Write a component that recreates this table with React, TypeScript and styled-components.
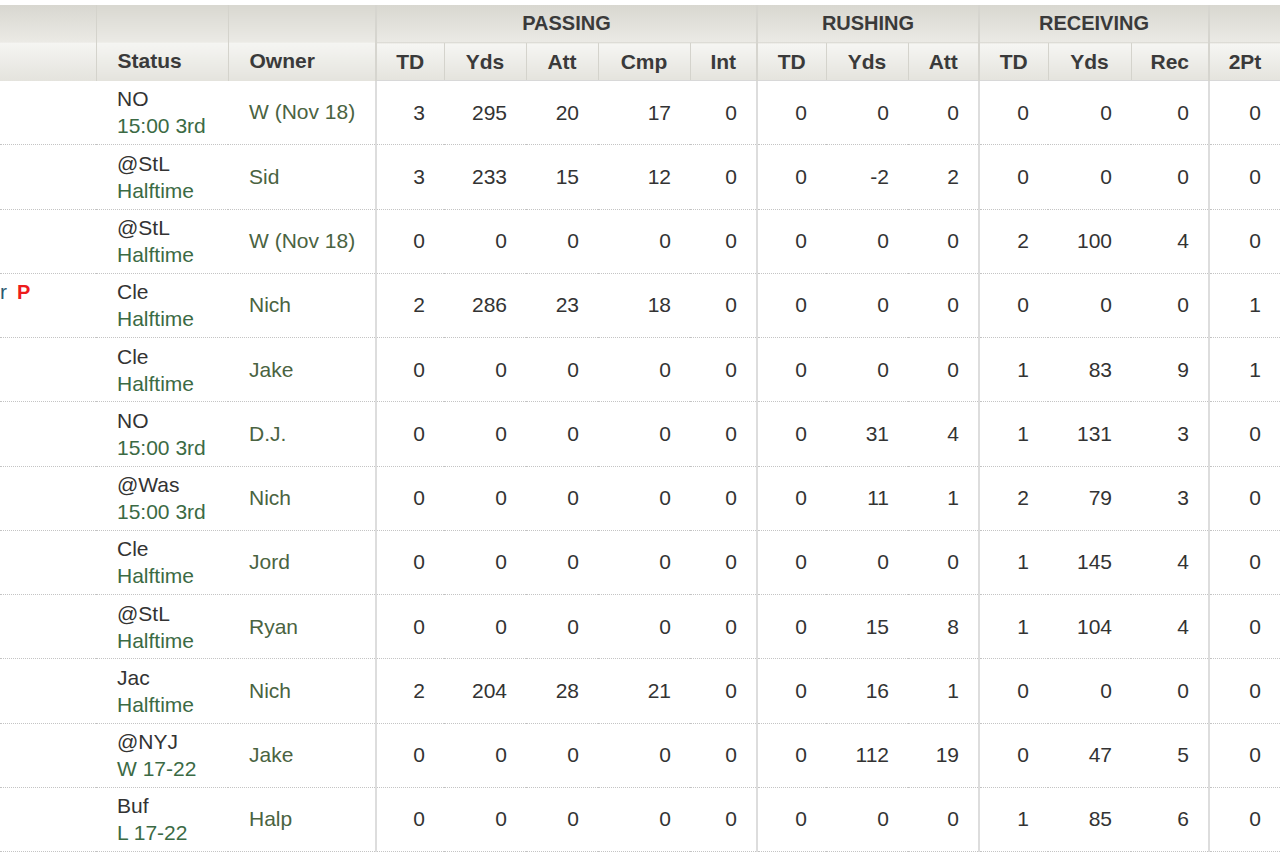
import { createGlobalStyle, styled } from 'styled-components';

type StatRow = {
  opp: string;
  state: string;
  owner: string;
  pass: number[];
  rush: number[];
  rec: number[];
  twoPt: number;
  name?: string;
  flag?: string;
};

const rows: StatRow[] = [
  { opp: 'NO', state: '15:00 3rd', owner: 'W (Nov 18)', pass: [3, 295, 20, 17, 0], rush: [0, 0, 0], rec: [0, 0, 0], twoPt: 0 },
  { opp: '@StL', state: 'Halftime', owner: 'Sid', pass: [3, 233, 15, 12, 0], rush: [0, -2, 2], rec: [0, 0, 0], twoPt: 0 },
  { opp: '@StL', state: 'Halftime', owner: 'W (Nov 18)', pass: [0, 0, 0, 0, 0], rush: [0, 0, 0], rec: [2, 100, 4], twoPt: 0 },
  { opp: 'Cle', state: 'Halftime', owner: 'Nich', pass: [2, 286, 23, 18, 0], rush: [0, 0, 0], rec: [0, 0, 0], twoPt: 1, name: 'r', flag: 'P' },
  { opp: 'Cle', state: 'Halftime', owner: 'Jake', pass: [0, 0, 0, 0, 0], rush: [0, 0, 0], rec: [1, 83, 9], twoPt: 1 },
  { opp: 'NO', state: '15:00 3rd', owner: 'D.J.', pass: [0, 0, 0, 0, 0], rush: [0, 31, 4], rec: [1, 131, 3], twoPt: 0 },
  { opp: '@Was', state: '15:00 3rd', owner: 'Nich', pass: [0, 0, 0, 0, 0], rush: [0, 11, 1], rec: [2, 79, 3], twoPt: 0 },
  { opp: 'Cle', state: 'Halftime', owner: 'Jord', pass: [0, 0, 0, 0, 0], rush: [0, 0, 0], rec: [1, 145, 4], twoPt: 0 },
  { opp: '@StL', state: 'Halftime', owner: 'Ryan', pass: [0, 0, 0, 0, 0], rush: [0, 15, 8], rec: [1, 104, 4], twoPt: 0 },
  { opp: 'Jac', state: 'Halftime', owner: 'Nich', pass: [2, 204, 28, 21, 0], rush: [0, 16, 1], rec: [0, 0, 0], twoPt: 0 },
  { opp: '@NYJ', state: 'W 17-22', owner: 'Jake', pass: [0, 0, 0, 0, 0], rush: [0, 112, 19], rec: [0, 47, 5], twoPt: 0 },
  { opp: 'Buf', state: 'L 17-22', owner: 'Halp', pass: [0, 0, 0, 0, 0], rush: [0, 0, 0], rec: [1, 85, 6], twoPt: 0 },
];

const widths = [96, 132, 148, 68, 82, 72, 92, 67, 69, 82, 71, 69, 83, 78, 71];

const groups = [
  { label: 'PASSING', cols: ['TD', 'Yds', 'Att', 'Cmp', 'Int'] },
  { label: 'RUSHING', cols: ['TD', 'Yds', 'Att'] },
  { label: 'RECEIVING', cols: ['TD', 'Yds', 'Rec'] },
  { label: '', cols: ['2Pt'] },
];

const App = () => {
  return (
    <>
      <GlobalStyle />
      <Page>
        <StatsTable>
          <colgroup>
            {widths.map((w, i) => (
              <col key={i} style={{ width: w }} />
            ))}
          </colgroup>
          <thead>
            <tr>
              <GroupHead rowSpan={2} />
              <LabelHead rowSpan={2}>Status</LabelHead>
              <LabelHead rowSpan={2}>Owner</LabelHead>
              {groups.map((g) => (
                <GroupHead key={g.label || 'extra'} colSpan={g.cols.length} $divider>
                  {g.label}
                </GroupHead>
              ))}
            </tr>
            <tr>
              {groups.map((g) =>
                g.cols.map((c, i) => (
                  <SubHead key={g.label + c} $divider={i === 0}>
                    {c}
                  </SubHead>
                ))
              )}
            </tr>
          </thead>
          <tbody>
            {rows.map((r, idx) => (
              <Row key={idx}>
                <NameCell>
                  {r.name && (
                    <>
                      <PlayerName>{r.name}</PlayerName>
                      <Flag>{r.flag}</Flag>
                    </>
                  )}
                </NameCell>
                <StatusCell>
                  <Opponent>{r.opp}</Opponent>
                  <GameState>{r.state}</GameState>
                </StatusCell>
                <OwnerCell>{r.owner}</OwnerCell>
                {[r.pass, r.rush, r.rec, [r.twoPt]].map((set, g) =>
                  set.map((v, i) => (
                    <NumCell key={`${g}-${i}`} $divider={i === 0}>
                      {v}
                    </NumCell>
                  ))
                )}
              </Row>
            ))}
          </tbody>
        </StatsTable>
      </Page>
    </>
  );
};

export default App;

const GlobalStyle = createGlobalStyle`
  body {
    margin: 0;
    background: #ffffff;
    font-family: 'Liberation Sans', Arial, sans-serif;
    overflow: hidden;
  }
`;

const Page = styled.div`
  padding-top: 5px;
  width: 1280px;
`;

const StatsTable = styled.table`
  width: 1280px;
  table-layout: fixed;
  border-collapse: collapse;
  font-size: 21px;
  color: #333333;
`;

const headBase = `
  font-weight: bold;
  color: #3a3a3a;
  border-left: 1px solid #d4d3cc;
  padding: 0;
  white-space: nowrap;
`;

const GroupHead = styled.th<{ $divider?: boolean }>`
  ${headBase}
  height: 37px;
  font-size: 20px;
  text-align: center;
  vertical-align: middle;
  background: linear-gradient(#d8d7d0, #ebeae5);
  border-left: ${(p) => (p.$divider ? '2px solid #d6d5cf' : '1px solid #d4d3cc')};
  &:first-child {
    border-left: none;
    background: linear-gradient(#d8d7d0 0%, #ebeae5 49%, #f5f5f2 50%, #e4e3dd 100%);
  }
`;

const LabelHead = styled.th`
  ${headBase}
  text-align: left;
  vertical-align: bottom;
  padding: 0 0 8px 21px;
  background: linear-gradient(#d8d7d0 0%, #ebeae5 49%, #f5f5f2 50%, #e4e3dd 100%);
`;

const SubHead = styled.th<{ $divider: boolean }>`
  ${headBase}
  height: 37px;
  text-align: center;
  vertical-align: middle;
  background: linear-gradient(#f6f6f3, #e4e3dd);
  border-top: 1px solid #dddcd6;
  border-bottom: 1px solid #d8d8d8;
  border-left: ${(p) => (p.$divider ? '2px solid #d6d5cf' : '1px solid #d4d3cc')};
`;

const Row = styled.tr`
  height: 64.25px;
  border-bottom: 1px dotted #c4c4c4;
`;

const cellBase = `
  padding: 0;
  vertical-align: middle;
  white-space: nowrap;
  overflow: hidden;
`;

const NameCell = styled.td`
  ${cellBase}
  vertical-align: top;
  padding-top: 4px;
  line-height: 27px;
`;

const PlayerName = styled.span`
  color: #2b5a70;
`;

const Flag = styled.span`
  margin-left: 10px;
  color: #ee1c1c;
  font-weight: bold;
  font-size: 20px;
`;

const StatusCell = styled.td`
  ${cellBase}
  padding-left: 21px;
  line-height: 27px;
`;

const Opponent = styled.div`
  color: #333333;
`;

const GameState = styled.div`
  color: #3b6a44;
`;

const OwnerCell = styled.td`
  ${cellBase}
  padding-left: 21px;
  color: #4a6341;
`;

const NumCell = styled.td<{ $divider: boolean }>`
  ${cellBase}
  text-align: right;
  padding-right: 19px;
  color: #333333;
  border-left: ${(p) => (p.$divider ? '2px solid #dddddd' : 'none')};
`;
